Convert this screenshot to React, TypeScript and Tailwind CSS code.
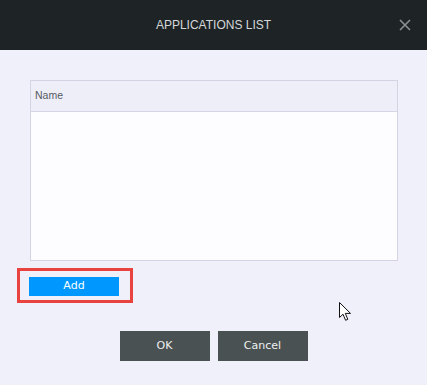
import React from 'react';

const App: React.FC = () => {
  return (
    <div className="relative w-[427px] h-[385px] bg-[#f0f0fa] overflow-hidden" style={{ fontFamily: '"Liberation Sans", Arial, sans-serif' }}>
      {/* header */}
      <div className="relative h-[50px] bg-[#1e2426] flex items-center justify-center">
        <span className="text-[12px] text-[#d4d8da] pb-[1px]">APPLICATIONS LIST</span>
        <button className="absolute right-[16px] top-[18px] w-[13px] h-[13px] flex items-center justify-center">
          <svg width="12" height="12" viewBox="0 0 12 12">
            <path d="M1 1L11 11M11 1L1 11" stroke="#8c9496" strokeWidth="1.5" />
          </svg>
        </button>
      </div>

      {/* body */}
      <div className="px-[30px] pt-[30px]">
        <div className="w-[368px] h-[181px] border border-[#d3d3e3] bg-[#fdfdff] flex flex-col">
          <div className="h-[31px] bg-[#eeeef9] border-b border-[#d6d6e6] flex items-center px-[4px]">
            <span className="text-[10.5px] text-[#555a5e]">Name</span>
          </div>
          <div className="flex-1" />
        </div>
      </div>

      <div className="ml-[17px] mt-[7px] w-[116px] h-[35px] border-[3px] border-[#e8433f] flex items-center pl-[9px] pt-[1px]">
        <button className="w-[90px] h-[19px] bg-[#0098ff] text-white text-[11px] flex items-center justify-center" style={{ fontFamily: '"DejaVu Sans", sans-serif' }}>
          Add
        </button>
      </div>

      <div className="mt-[28px] flex justify-center gap-[8px]">
        <button className="w-[90px] h-[30px] bg-[#4a5152] text-[#eef0f0] text-[11px]" style={{ fontFamily: '"DejaVu Sans", sans-serif' }}>OK</button>
        <button className="w-[90px] h-[30px] bg-[#4a5152] text-[#eef0f0] text-[11px]" style={{ fontFamily: '"DejaVu Sans", sans-serif' }}>Cancel</button>
      </div>

      {/* mouse cursor */}
      <svg className="absolute left-[339px] top-[302px]" width="13" height="20" viewBox="0 0 13 20">
        <path d="M0.5 0.5L0.5 15.5L4 12.2L6.6 18.3L8.8 17.3L6.3 11.4L11.5 11.4Z" fill="#ffffff" stroke="#111111" strokeWidth="1" strokeLinejoin="round" />
      </svg>
    </div>
  );
};

export default App;
